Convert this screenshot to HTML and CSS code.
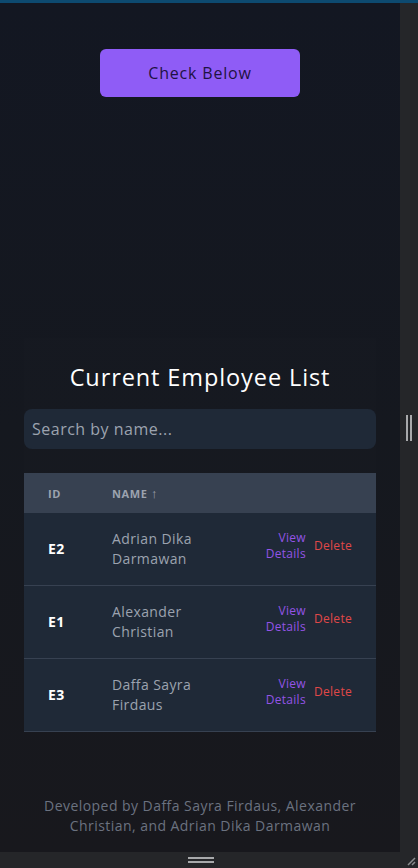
FILE: index.html
```html
<!DOCTYPE html>
<html lang="en">
<head>
<meta charset="utf-8">
<title>Employee List</title>
<link rel="stylesheet" href="styles.css">
</head>
<body>
<div class="topline"></div>
<div class="frame">
  <main class="main">
    <div class="hero">
      <button class="cta">Check Below</button>
    </div>
    <section class="card">
      <h2 class="title">Current Employee List</h2>
      <input class="search" type="text" placeholder="Search by name...">
      <div class="table">
        <div class="thead">
          <div class="th">ID</div>
          <div class="th">NAME <span class="arrow">↑</span></div>
          <div class="th"></div>
        </div>
        <div class="tr">
          <div class="td id">E2</div>
          <div class="td name">Adrian Dika Darmawan</div>
          <div class="td actions"><a class="view">View Details</a><a class="del">Delete</a></div>
        </div>
        <div class="tr">
          <div class="td id">E1</div>
          <div class="td name">Alexander Christian</div>
          <div class="td actions"><a class="view">View Details</a><a class="del">Delete</a></div>
        </div>
        <div class="tr">
          <div class="td id">E3</div>
          <div class="td name">Daffa Sayra Firdaus</div>
          <div class="td actions"><a class="view">View Details</a><a class="del">Delete</a></div>
        </div>
      </div>
    </section>
    <footer class="footer">Developed by Daffa Sayra Firdaus, Alexander Christian, and Adrian Dika Darmawan</footer>
  </main>
  <aside class="side"><span class="grip"></span></aside>
</div>
<div class="bottombar">
  <span class="hgrip"></span>
  <svg class="resize" width="12" height="12" viewBox="0 0 12 12"><path d="M11 4 L4 11 M11 8 L8 11" stroke="#8a8b8e" stroke-width="1.5" fill="none"/></svg>
</div>
</body>
</html>
```
FILE: styles.css
```css
* { box-sizing: border-box; }
html, body { margin: 0; padding: 0; }
body {
  width: 418px;
  height: 868px;
  overflow: hidden;
  background: #252629;
  font-family: "Open Sans", "Liberation Sans", sans-serif;
  display: flex;
  flex-direction: column;
}
.topline { height: 3px; background: #0d4a70; flex: none; }
.frame { display: flex; height: 849px; flex: none; }
.main {
  width: 400px;
  height: 849px;
  background: linear-gradient(#131722, #15181f 50%, #18181d);
  display: flex;
  flex-direction: column;
  align-items: center;
}
.hero { padding-top: 46px; height: 335px; }
.cta {
  width: 200px;
  height: 48px;
  border: none;
  border-radius: 6px;
  background: #8f5cf6;
  color: #1e1242;
  font-family: inherit;
  font-size: 16px;
  letter-spacing: 0.8px;
}
.card {
  width: 352px;
  display: flex;
  flex-direction: column;
  background: rgba(255,255,255,0.006);
}
.title {
  margin: 23px 0 16px;
  text-align: center;
  color: #fff;
  font-weight: 400;
  font-size: 23.5px;
  letter-spacing: 0.9px;
  line-height: 32px;
}
.search {
  height: 40px;
  border: none;
  border-radius: 8px;
  background: #1f2937;
  padding: 0 8px;
  font-family: inherit;
  font-size: 16px;
  letter-spacing: 0.5px;
  color: #fff;
}
.search::placeholder { color: #9ca3af; }
.table { margin-top: 24px; }
.thead, .tr {
  display: grid;
  grid-template-columns: 64px 152px 136px;
}
.thead { background: #374151; height: 40px; align-items: center; }
.th {
  padding-left: 24px;
  color: #9ca3af;
  font-size: 11px;
  font-weight: 700;
  letter-spacing: 0.6px;
}
.arrow { font-weight: 400; font-size: 13px; }
.tr {
  background: #1f2937;
  height: 73px;
  border-bottom: 1px solid #374151;
  align-items: center;
}
.td { font-size: 14px; line-height: 20px; }
.id { padding-left: 24px; color: #fff; font-weight: 700; letter-spacing: 0.3px; }
.name { padding-left: 24px; padding-right: 14px; color: #9ca3af; letter-spacing: 0.4px; }
.actions {
  display: flex;
  align-items: center;
  justify-content: flex-end;
  gap: 8px;
  padding-right: 24px;
  margin-top: -6px;
  font-size: 12px;
  line-height: 16px;
  letter-spacing: 0.3px;
}
.view { color: #9454e6; text-align: right; width: 44px; }
.del { color: #e04848; }
.footer {
  margin-top: 64px;
  width: 340px;
  text-align: center;
  color: #6b7280;
  font-size: 14px;
  line-height: 20px;
  letter-spacing: 0.45px;
}
.side {
  width: 18px;
  display: flex;
  align-items: center;
  justify-content: center;
}
.grip {
  width: 6px;
  height: 26px;
  border-left: 2px solid #a8a9ab;
  border-right: 2px solid #a8a9ab;
}
.bottombar {
  height: 16px;
  position: relative;
  display: flex;
  justify-content: center;
  align-items: center;
  padding-right: 18px;
}
.hgrip {
  width: 26px;
  height: 6px;
  border-top: 2px solid #a8a9ab;
  border-bottom: 2px solid #a8a9ab;
  margin-left: 2px;
}
.resize { position: absolute; right: 2px; bottom: 2px; }
```
